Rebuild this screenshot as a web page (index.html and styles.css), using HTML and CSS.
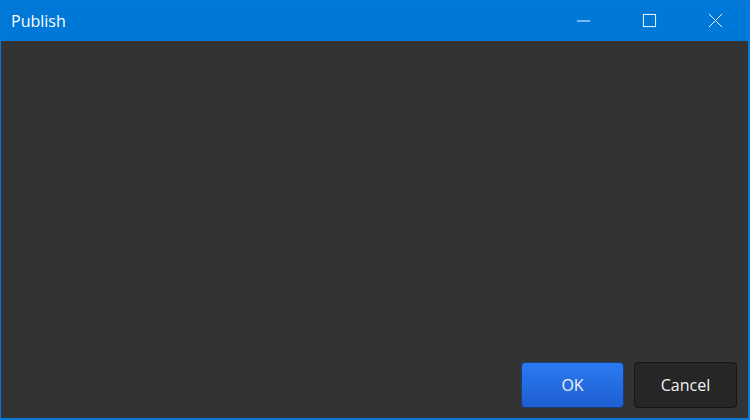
FILE: index.html
```html
<!DOCTYPE html>
<html>
<head>
<meta charset="utf-8">
<link rel="stylesheet" href="styles.css">
</head>
<body>
<div class="window">
  <div class="titlebar">
    <div class="title">Publish</div>
    <div class="controls">
      <div class="ctl">
        <svg width="16" height="16" viewBox="0 0 16 16"><path d="M1 8.5h14" stroke="#fff" stroke-width="1"/></svg>
      </div>
      <div class="ctl">
        <svg width="16" height="16" viewBox="0 0 16 16"><rect x="1.5" y="1.5" width="13" height="13" fill="none" stroke="#fff" stroke-width="1"/></svg>
      </div>
      <div class="ctl">
        <svg width="16" height="16" viewBox="0 0 16 16"><path d="M1 1L15 15M15 1L1 15" stroke="#fff" stroke-width="1"/></svg>
      </div>
    </div>
  </div>
  <div class="content"></div>
  <div class="footer">
    <button class="btn primary">OK</button>
    <button class="btn">Cancel</button>
  </div>
</div>
</body>
</html>
```
FILE: styles.css
```css
html, body {
  margin: 0;
  padding: 0;
}
body {
  width: 750px;
  height: 420px;
  overflow: hidden;
  font-family: "Open Sans", "Noto Sans", sans-serif;
}
.window {
  box-sizing: border-box;
  width: 750px;
  height: 420px;
  border: 1px solid #0a78d7;
  border-bottom-width: 2px;
  border-right-width: 2px;
  background: #333333;
  display: flex;
  flex-direction: column;
}
.titlebar {
  height: 40px;
  background: #0078d7;
  display: flex;
  align-items: center;
  justify-content: space-between;
  color: #fff;
}
.title {
  padding-left: 10px;
  font-size: 16px;
  margin-top: -1px;
}
.controls {
  display: flex;
  height: 100%;
}
.ctl {
  width: 66px;
  display: flex;
  align-items: center;
  justify-content: center;
  margin-top: -1px;
}
.ctl svg {
  width: 15px;
  height: 15px;
}
.content {
  flex: 1;
}
.footer {
  display: flex;
  justify-content: flex-end;
  gap: 10px;
  padding: 0 11px 10px 0;
}
.btn {
  box-sizing: border-box;
  width: 103px;
  height: 46px;
  border-radius: 4px;
  border: 1px solid #151515;
  background: #262626;
  color: #f2f2f2;
  font-family: "Open Sans", "Noto Sans", sans-serif;
  font-size: 16px;
  padding: 0;
}
.btn.primary {
  background: linear-gradient(#2b7af2, #1e5fd2);
  border-color: #1a3f7a;
}
```
